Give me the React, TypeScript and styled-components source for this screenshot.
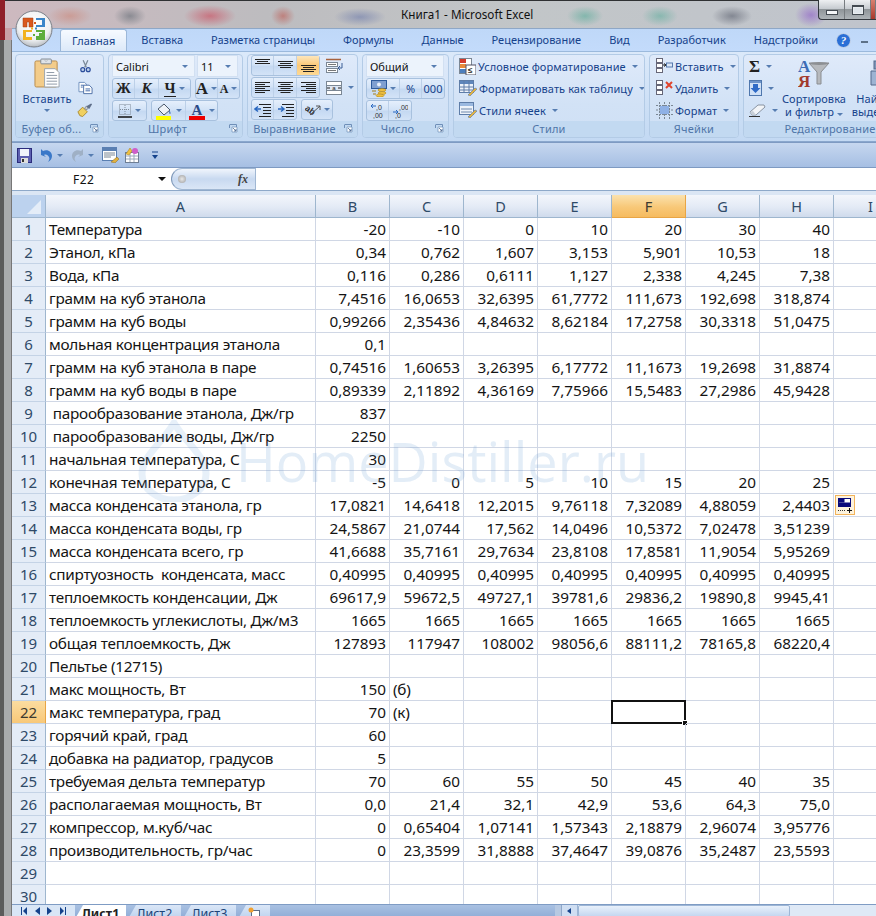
import React from "react";
import styled, { createGlobalStyle } from "styled-components";

const GlobalStyle = createGlobalStyle`
  html, body { margin: 0; padding: 0; background: #777; }
  * { box-sizing: border-box; }
`;

const UI_FONT = `"Noto Sans", "Open Sans", sans-serif`;
const CELL_FONT = `"Noto Sans", "Open Sans", sans-serif`;

const rows: string[][] = [
  ["Температура", "-20", "-10", "0", "10", "20", "30", "40"],
  ["Этанол, кПа", "0,34", "0,762", "1,607", "3,153", "5,901", "10,53", "18"],
  ["Вода, кПа", "0,116", "0,286", "0,6111", "1,127", "2,338", "4,245", "7,38"],
  ["грамм на куб этанола", "7,4516", "16,0653", "32,6395", "61,7772", "111,673", "192,698", "318,874"],
  ["грамм на куб воды", "0,99266", "2,35436", "4,84632", "8,62184", "17,2758", "30,3318", "51,0475"],
  ["мольная концентрация этанола", "0,1"],
  ["грамм на куб этанола в паре", "0,74516", "1,60653", "3,26395", "6,17772", "11,1673", "19,2698", "31,8874"],
  ["грамм на куб воды в паре", "0,89339", "2,11892", "4,36169", "7,75966", "15,5483", "27,2986", "45,9428"],
  [" парообразование этанола, Дж/гр", "837"],
  [" парообразование воды, Дж/гр", "2250"],
  ["начальная температура, С", "30"],
  ["конечная температура, С", "-5", "0", "5", "10", "15", "20", "25"],
  ["масса конденсата этанола, гр", "17,0821", "14,6418", "12,2015", "9,76118", "7,32089", "4,88059", "2,4403"],
  ["масса конденсата воды, гр", "24,5867", "21,0744", "17,562", "14,0496", "10,5372", "7,02478", "3,51239"],
  ["масса конденсата всего, гр", "41,6688", "35,7161", "29,7634", "23,8108", "17,8581", "11,9054", "5,95269"],
  ["спиртуозность  конденсата, масс", "0,40995", "0,40995", "0,40995", "0,40995", "0,40995", "0,40995", "0,40995"],
  ["теплоемкость конденсации, Дж", "69617,9", "59672,5", "49727,1", "39781,6", "29836,2", "19890,8", "9945,41"],
  ["теплоемкость углекислоты, Дж/м3", "1665", "1665", "1665", "1665", "1665", "1665", "1665"],
  ["общая теплоемкость, Дж", "127893", "117947", "108002", "98056,6", "88111,2", "78165,8", "68220,4"],
  ["Пельтье (12715)"],
  ["макс мощность, Вт", "150", "(б)"],
  ["макс температура, град", "70", "(к)"],
  ["горячий край, град", "60"],
  ["добавка на радиатор, градусов", "5"],
  ["требуемая дельта температур", "70", "60", "55", "50", "45", "40", "35"],
  ["располагаемая мощность, Вт", "0,0", "21,4", "32,1", "42,9", "53,6", "64,3", "75,0"],
  ["компрессор, м.куб/час", "0", "0,65404", "1,07141", "1,57343", "2,18879", "2,96074", "3,95776"],
  ["производительность, гр/час", "0", "23,3599", "31,8888", "37,4647", "39,0876", "35,2487", "23,5593"],
  [],
  [],
];
const columns = ["A", "B", "C", "D", "E", "F", "G", "H", "I"];
const tabs = ["Главная", "Вставка", "Разметка страницы", "Формулы", "Данные", "Рецензирование", "Вид", "Разработчик", "Надстройки"];

const Frame = styled.div`
  position: relative;
  width: 876px;
  height: 916px;
  overflow: hidden;
  display: flex;
  flex-direction: column;
  font-family: ${UI_FONT};
  background:
    linear-gradient(90deg, #8f1f28 0 5px, #c9a0a6 5px 12px) 0 0 / 100% 40px no-repeat,
    linear-gradient(90deg, #5b5b5b 0 4px, #a9abad 4px 11px, #777 11px 12px);
`;
const TitleBar = styled.div`
  height: 28px;
  flex: none;
  display: flex;
  padding-left: 396px;
  border-top: 1px solid #2f3133;
  margin-left: 5px;
  background:
    radial-gradient(ellipse 22px 10px at 65px 15px, rgba(205, 120, 100, 0.45), transparent),
    radial-gradient(ellipse 16px 10px at 125px 15px, rgba(90, 100, 110, 0.55), transparent),
    radial-gradient(ellipse 26px 11px at 205px 15px, rgba(205, 60, 80, 0.55), transparent),
    radial-gradient(ellipse 12px 10px at 278px 15px, rgba(190, 70, 60, 0.5), transparent),
    radial-gradient(ellipse 26px 9px at 355px 16px, rgba(70, 90, 160, 0.4), transparent),
    radial-gradient(ellipse 18px 10px at 580px 15px, rgba(80, 170, 150, 0.55), transparent),
    radial-gradient(ellipse 18px 10px at 655px 15px, rgba(80, 170, 150, 0.5), transparent),
    radial-gradient(ellipse 20px 10px at 727px 15px, rgba(80, 85, 100, 0.55), transparent),
    radial-gradient(ellipse 16px 12px at 806px 14px, rgba(140, 90, 200, 0.6), transparent),
    linear-gradient(90deg, #cdb9bf 0, #bdbcbf 30%, #c2c6c8 60%, #c0c4cc 100%);
`;
const Title = styled.div`
  font-size: 11.7px;
  line-height: 26px;
  color: #111;
  white-space: nowrap;
`;
const WinControls = styled.div`
  margin-left: auto;
  display: flex;
  height: 20px;
  margin-top: -1px;
  border: 1px solid #33383e;
  border-top: 0;
  border-right: 0;
  border-radius: 0 0 0 4px;
  background: linear-gradient(#eef0f2 0, #c7ccd1 45%, #8f9599 50%, #aeb4b8 100%);
`;
const WinButton = styled.div<{ $w: number; $close?: boolean }>`
  width: ${(p) => p.$w}px;
  display: flex;
  align-items: center;
  justify-content: center;
  border-right: 1px solid #777c80;
  background: ${(p) => (p.$close ? "linear-gradient(#d88070, #a8382a)" : "none")};
`;
const WinMin = styled.i`
  width: 12px;
  height: 5px;
  margin-top: 5px;
  border: 1px solid #444b52;
  background: #f4f6f8;
`;
const WinMax = styled.i`
  width: 12px;
  height: 10px;
  border: 1px solid #444b52;
  border-top-width: 2px;
  background: #dfe5ea;
  box-shadow: inset 0 0 0 1px #e9edf0;
`;
const Body = styled.div`
  margin-left: 12px;
  flex: 1;
  min-height: 0;
  display: flex;
  flex-direction: column;
  background: #bfdbff;
`;
const TabRow = styled.div`
  height: 23px;
  flex: none;
  display: flex;
  align-items: flex-end;
  padding-left: 48px;
  background: linear-gradient(#bfd8f8, #c3dbfb);
  border-top: 1px solid #8ea7c6;
`;
const Tab = styled.div<{ $active?: boolean }>`
  height: 22px;
  padding: 0 14px;
  font-size: 11px;
  line-height: 21px;
  color: #15428b;
  white-space: nowrap;
  ${(p) =>
    p.$active &&
    `
    padding: 0 11px;
    background: linear-gradient(#f6faff, #dce9f9);
    border: 1px solid #9cb8d9;
    border-bottom: 0;
    border-radius: 3px 3px 0 0;
  `}
`;
const HelpWrap = styled.div`
  margin-left: 4px;
  display: flex;
  align-items: center;
  gap: 10px;
  height: 22px;
`;
const MiniDash = styled.i`
  width: 7px;
  height: 2px;
  margin-top: 3px;
  background: #5d7188;
`;
const Ribbon = styled.div`
  height: 91px;
  flex: none;
  display: flex;
  gap: 4px;
  padding: 2px 0 0 3px;
  background: linear-gradient(#dbe9fa, #c3d9f3);
  border-top: 1px solid #9bb9dc;
  border-bottom: 1px solid #8aa7cd;
`;
const Group = styled.div<{ $w: number }>`
  width: ${(p) => p.$w}px;
  height: 84px;
  flex: none;
  display: flex;
  flex-direction: column;
  border: 1px solid #b3cbe6;
  border-radius: 4px;
  background: linear-gradient(#dfeafa, #d2e2f6 60%, #cfe0f5);
  overflow: hidden;
`;
const GroupBody = styled.div<{ $pad?: number }>`
  flex: 1;
  min-height: 0;
  display: flex;
  padding: 0 0 0 ${(p) => p.$pad ?? 3}px;
`;
const GroupLabel = styled.div<{ $launcher?: boolean }>`
  height: 16px;
  flex: none;
  display: flex;
  align-items: center;
  justify-content: center;
  padding: ${(p) => (p.$launcher ? "0 20px 2px 4px" : "0 0 2px")};
  position: relative;
  background: #c2d9f1;
  color: #4f75a8;
  font-size: 11px;
  letter-spacing: 0.2px;
  white-space: nowrap;
`;
const Launcher = styled.svg`
  position: absolute;
  right: 4px;
  top: 3px;
`;
const Stack = styled.div<{ $gap?: number }>`
  display: flex;
  flex-direction: column;
  gap: ${(p) => p.$gap ?? 1}px;
`;
const Line = styled.div<{ $gap?: number }>`
  display: flex;
  align-items: center;
  gap: ${(p) => p.$gap ?? 4}px;
`;
const Combo = styled.div<{ $w: number }>`
  width: ${(p) => p.$w}px;
  height: 22px;
  display: flex;
  align-items: center;
  justify-content: space-between;
  padding: 0 6px 0 3px;
  background: #ecf3fc;
  border: 1px solid #d2e0f2;
  font-size: 11px;
  color: #111;
`;
const BtnGroup = styled.div`
  height: 21px;
  display: flex;
  border: 1px solid #a8c1de;
  border-radius: 3px;
  background: linear-gradient(#e5effc, #d3e3f7 45%, #c5d9f2 55%, #d3e3f7);
`;
const Btn = styled.div<{ $w: number; $on?: boolean }>`
  width: ${(p) => p.$w}px;
  display: flex;
  align-items: center;
  justify-content: center;
  gap: 3px;
  border-right: 1px solid #bcd0e8;
  &:last-child { border-right: 0; }
  background: ${(p) => (p.$on ? "linear-gradient(#fde6bc, #fbc877 50%, #fdd995)" : "none")};
`;
const Glyph = styled.span<{ $size?: number; $italic?: boolean; $under?: boolean }>`
  font-family: "Liberation Serif", "DejaVu Serif", serif;
  font-weight: 700;
  font-size: ${(p) => p.$size ?? 15}px;
  line-height: 1;
  color: #222;
  font-style: ${(p) => (p.$italic ? "italic" : "normal")};
  border-bottom: ${(p) => (p.$under ? "1.5px solid #222" : "0")};
`;
const Caret = styled.i`
  display: inline-block;
  flex: none;
  width: 0;
  height: 0;
  border-left: 3px solid transparent;
  border-right: 3px solid transparent;
  border-top: 3px solid #567db1;
`;
const CmdText = styled.span`
  font-size: 11px;
  letter-spacing: 0.08px;
  color: #15428b;
  white-space: nowrap;
`;
const CmdRow = styled.div`
  height: 22px;
  display: flex;
  align-items: center;
  gap: 2px;
  white-space: nowrap;
`;
const CmdCaret = styled(Caret)`
  margin-left: 4px;
`;
const PasteBtn = styled.div`
  width: 54px;
  margin-left: 1px;
  display: flex;
  flex-direction: column;
  align-items: center;
  padding-top: 3px;
`;
const PasteLabel = styled(CmdText)`
  margin: 4px 0 3px;
  line-height: 14px;
  letter-spacing: 0.15px;
`;
const BigLabel = styled(CmdText)`
  text-align: center;
  line-height: 13px;
`;
const SideIcons = styled.div`
  margin-left: 3px;
  display: flex;
  flex-direction: column;
  align-items: center;
  padding-top: 4px;
  gap: 7px;
`;
const SortBtn = styled.div<{ $w: number }>`
  width: ${(p) => p.$w}px;
  flex: none;
  display: flex;
  flex-direction: column;
  align-items: center;
  padding-top: 3px;
  gap: 4px;
`;
const Qat = styled.div`
  height: 26px;
  flex: none;
  display: flex;
  align-items: center;
  gap: 8px;
  padding-left: 5px;
  background: linear-gradient(#c6d7ef, #a6bfe3);
  border-top: 1px solid #7e9ac2;
  border-bottom: 1px solid #7e9ac2;
`;
const MacroSlot = styled.span`
  display: flex;
  margin-left: -3px;
`;
const MoreSlot = styled.span`
  display: flex;
  margin-left: 3px;
`;
const FormulaBar = styled.div`
  height: 23px;
  flex: none;
  display: flex;
  background: #fff;
  border-bottom: 1px solid #8ea9c9;
`;
const NameBox = styled.div`
  width: 159px;
  flex: none;
  display: flex;
  align-items: center;
  justify-content: space-between;
  padding: 0 5px 0 61px;
  font-size: 12px;
  letter-spacing: 0.4px;
  color: #111;
`;
const NameCaret = styled.i`
  width: 0;
  height: 0;
  border-left: 4px solid transparent;
  border-right: 4px solid transparent;
  border-top: 4px solid #111;
`;
const FxPill = styled.div`
  width: 85px;
  flex: none;
  display: flex;
  align-items: center;
  justify-content: space-between;
  padding: 0 7px 0 6px;
  border: 1px solid #a0b7d3;
  border-left-color: #7d97b8;
  border-radius: 11px 0 0 11px;
  background: linear-gradient(#f0f5fc, #c8d9f0 50%, #dae6f6);
`;
const FxDot = styled.i`
  width: 8px;
  height: 8px;
  border-radius: 50%;
  background: radial-gradient(#e8e8e8, #9d9d9d);
`;
const Fx = styled.span`
  font-family: "Liberation Serif", serif;
  font-style: italic;
  font-weight: 700;
  font-size: 12px;
  color: #444;
`;
const GapBar = styled.div`
  height: 4px;
  flex: none;
  background: #dbe6f4;
`;
const Sheet = styled.div`
  position: relative;
  height: 709px;
  flex: none;
  overflow: hidden;
  background: #fff;
`;
const GridRow = styled.div`
  display: grid;
  grid-template-columns: 34px 270px repeat(8, 74px);
  height: 23px;
`;
const Corner = styled.div`
  position: relative;
  background: #bcd2ee;
  border-right: 1px solid #9eb6ce;
  border-bottom: 1px solid #9eb6ce;
  &::after {
    content: "";
    position: absolute;
    right: 4px;
    bottom: 3px;
    border-left: 14px solid transparent;
    border-bottom: 14px solid #e4edf8;
  }
`;
const ColHead = styled.div<{ $on?: boolean }>`
  display: flex;
  align-items: center;
  justify-content: center;
  font-family: ${CELL_FONT};
  font-size: 14.5px;
  color: ${(p) => (p.$on ? "#3c3a30" : "#2f4a68")};
  background: ${(p) =>
    p.$on ? "linear-gradient(#fbe2ae, #f8c878 55%, #f6bb5f)" : "linear-gradient(#f3f6fb, #e3eaf5 55%, #cfdbec)"};
  border-right: 1px solid ${(p) => (p.$on ? "#e8a545" : "#9eb6ce")};
  border-bottom: 1px solid ${(p) => (p.$on ? "#e8a545" : "#9eb6ce")};
`;
const RowHead = styled.div<{ $on?: boolean }>`
  display: flex;
  align-items: center;
  justify-content: center;
  font-family: ${CELL_FONT};
  font-size: 15px;
  color: ${(p) => (p.$on ? "#3c3a30" : "#2f4a68")};
  background: ${(p) => (p.$on ? "linear-gradient(#fbdca0, #f8c878)" : "#e4ecf7")};
  border-right: 1px solid ${(p) => (p.$on ? "#e8a545" : "#9eb6ce")};
  border-bottom: 1px solid #c4d3e6;
`;
const Cell = styled.div<{ $right?: boolean; $selected?: boolean }>`
  position: relative;
  min-width: 0;
  padding: 0 3px;
  font-family: ${CELL_FONT};
  font-size: 15.3px;
  line-height: 22px;
  color: #141414;
  white-space: pre;
  text-align: ${(p) => (p.$right ? "right" : "left")};
  letter-spacing: ${(p) => (p.$right ? "0" : "-0.25px")};
  border-right: 1px solid #d0d7e5;
  border-bottom: 1px solid #d0d7e5;
  ${(p) =>
    p.$selected &&
    `
    &::before {
      content: "";
      position: absolute;
      box-sizing: border-box;
      left: -1px;
      top: -1px;
      width: 75px;
      height: 24px;
      border: 2px solid #111;
    }
    &::after {
      content: "";
      position: absolute;
      box-sizing: border-box;
      right: -3px;
      bottom: -3px;
      width: 6px;
      height: 6px;
      background: #111;
      border: 1px solid #fff;
    }
  `}
`;
const SmartTag = styled.div`
  position: absolute;
  left: 1px;
  top: 1px;
  width: 20px;
  height: 20px;
  background: #fdf3dd;
  border: 1px solid #f3b45c;
  display: flex;
  align-items: center;
  justify-content: center;
`;
const Watermark = styled.div`
  position: absolute;
  left: 125px;
  top: 225px;
  display: flex;
  align-items: center;
  gap: 25px;
  pointer-events: none;
`;
const WatermarkText = styled.span`
  font-family: "Open Sans", "Noto Sans", sans-serif;
  font-weight: 400;
  font-size: 54px;
  line-height: 60px;
  color: rgba(105, 160, 215, 0.19);
  white-space: nowrap;
`;
const SheetBar = styled.div`
  height: 12px;
  flex: none;
  display: flex;
  align-items: flex-start;
  background: linear-gradient(#a9c1e2, #93afd8);
  border-top: 1px solid #7f9cc4;
  overflow: hidden;
`;
const NavBtns = styled.div`
  width: 63px;
  height: 12px;
  flex: none;
  display: flex;
  align-items: center;
  justify-content: space-around;
  padding: 0 6px;
  background: #d9e6f6;
`;
const SheetTab = styled.div<{ $active?: boolean; $w: number }>`
  width: ${(p) => p.$w}px;
  height: 14px;
  flex: none;
  text-align: center;
  font-family: ${CELL_FONT};
  font-size: 12.5px;
  font-weight: ${(p) => (p.$active ? 700 : 400)};
  line-height: 18px;
  color: ${(p) => (p.$active ? "#222" : "#1c4478")};
  background: ${(p) => (p.$active ? "#fff" : "linear-gradient(#dbe7f7, #bcd1ee)")};
  clip-path: polygon(8px 0, 100% 0, 100% 100%, 0 100%);
  margin-right: 2px;
`;
const Filler = styled.div`
  flex: 1;
`;
const ScrollZone = styled.div`
  width: 321px;
  height: 12px;
  flex: none;
  display: flex;
  background: #dfe9f6;
`;
const Splitter = styled.i`
  width: 7px;
  background: #b7c9e2;
  border-right: 1px solid #8ea7c9;
`;
const ScrollArrow = styled.div`
  width: 16px;
  display: flex;
  align-items: center;
  justify-content: center;
  background: #cfdef2;
  border-right: 1px solid #9db6d6;
`;
const Thumb = styled.i`
  width: 212px;
  background: linear-gradient(#e9f1fb, #c4d7f0);
  border: 1px solid #9db6d6;
  border-radius: 2px;
`;
const OrbWrap = styled.svg`
  position: absolute;
  left: 15px;
  top: 10px;
`;

// drawings
const OfficeOrb = () => (
  <OrbWrap width="38" height="38" viewBox="0 0 38 38">
    <defs>
      <radialGradient id="orb" cx="50%" cy="35%" r="70%">
        <stop offset="0" stopColor="#fff" />
        <stop offset="0.65" stopColor="#eef0f2" />
        <stop offset="1" stopColor="#a9afb6" />
      </radialGradient>
    </defs>
    <circle cx="19" cy="19" r="18" fill="url(#orb)" stroke="#7b8088" />
    <path d="M8 8h10v9h-4v-5h-2v5H8z" fill="#d9581e" stroke="#a33f10" strokeWidth="0.5" />
    <path d="M21 8h9v9h-9v-2h6v-5h-6z" fill="#3b86c9" />
    <path d="M8 20h9v2h-6v5h6v3H8z" fill="#f2b21f" />
    <path d="M21 20h9v10h-9v-4h3v-3h3v-1h-6z" fill="#5eae3c" />
    <rect x="19" y="12" width="2" height="2" fill="#d9581e" />
    <rect x="16" y="17.5" width="2" height="2" fill="#f2b21f" />
    <rect x="20" y="17.5" width="2" height="2" fill="#3b86c9" />
    <rect x="18" y="24" width="2" height="2" fill="#5eae3c" />
  </OrbWrap>
);
const Clipboard = () => (
  <svg width="27" height="30" viewBox="0 0 28 31">
    <rect x="1" y="3" width="23" height="27" rx="1.5" fill="#f3cc8a" stroke="#b78a4b" />
    <rect x="7" y="1" width="11" height="5" rx="1" fill="#dfe3e8" stroke="#7f8894" />
    <circle cx="12.5" cy="2.5" r="1" fill="#fff" stroke="#7f8894" strokeWidth="0.5" />
    <path d="M11 11h11l4 4v15H11z" fill="#fff" stroke="#9aa3ad" />
    <path d="M13 15h8M13 18h11M13 21h11M13 24h11M13 27h11" stroke="#8d98a6" />
  </svg>
);
const Scissors = () => (
  <svg width="11" height="15" viewBox="0 0 14 16">
    <path d="M4 0l4 9M10 0L6 9" stroke="#7b8a99" strokeWidth="1.6" />
    <circle cx="3.5" cy="12" r="2.5" fill="#bcd0ea" stroke="#2c4e9c" strokeWidth="1.5" />
    <circle cx="10.5" cy="12" r="2.5" fill="#bcd0ea" stroke="#2c4e9c" strokeWidth="1.5" />
  </svg>
);
const CopyIcon = () => (
  <svg width="15" height="14" viewBox="0 0 16 14">
    <path d="M1 1h6l2 2v8H1z" fill="#fff" stroke="#6e8fbd" />
    <path d="M6 4h6l3 3v6H6z" fill="#fff" stroke="#4a6da5" />
    <path d="M3 4h3M3 6h2M8 8h5M8 10h5" stroke="#3a63a5" />
  </svg>
);
const BrushIcon = () => (
  <svg width="16" height="15" viewBox="0 0 17 15">
    <path d="M1 10l5-5 5 5-5 5-3-1z" fill="#f0d060" stroke="#a98a30" />
    <path d="M8 6l2-2 2 2-2 2z" fill="#c9cdd3" stroke="#7a8088" />
    <path d="M10 4l5-3 1 1-3 5z" fill="#5f6f8a" />
  </svg>
);
const Launch = () => (
  <Launcher width="9" height="9" viewBox="0 0 9 9">
    <path d="M.5.5h7v7M.5 1v3" fill="none" stroke="#6f8fb8" />
    <path d="M3 3h5v5H3z" fill="#fff" stroke="#6f8fb8" strokeWidth="0.7" />
    <path d="M4 4l3 3M7 5v2H5" fill="none" stroke="#47668f" strokeWidth="0.8" />
  </Launcher>
);
const BordersIcon = () => (
  <svg width="14" height="14" viewBox="0 0 14 14">
    <rect x="1.5" y="0.5" width="11" height="10" fill="none" stroke="#7f8b99" strokeDasharray="1 1" />
    <path d="M7 1v10M2 5.5h10" stroke="#7f8b99" strokeDasharray="1 1" />
    <path d="M0 13h14" stroke="#111" strokeWidth="1.5" />
  </svg>
);
const FillIcon = () => (
  <svg width="18" height="18" viewBox="0 0 18 18">
    <path d="M3 7l6-5 6 6-6 5z" fill="#eef2f7" stroke="#4c5a6c" />
    <path d="M14 8c2 2 2 4 1 4s-1-2-1-4z" fill="#4f7ec0" />
    <rect x="1" y="14" width="15" height="4" fill="#ffff00" />
  </svg>
);
const FontColorIcon = () => (
  <svg width="18" height="18" viewBox="0 0 18 18">
    <text x="9" y="12.5" fontFamily="Liberation Serif" fontWeight="700" fontSize="15" fill="#2b4a86" textAnchor="middle">A</text>
    <rect x="1" y="14" width="16" height="4" fill="#ee0000" />
  </svg>
);
const VAlign = ({ v }: { v: "t" | "c" | "b" }) => {
  const ys = v === "t" ? [2, 4, 6] : v === "c" ? [4, 6, 8, 10] : [8, 10, 12, 14];
  return (
    <svg width="15" height="16" viewBox="0 0 15 16">
      {ys.map((y, i) => (
        <path key={y} d={`M${i % 2 ? 2 : 0} ${y - 0.5}h${i % 2 ? 11 : 15}`} stroke="#222" />
      ))}
    </svg>
  );
};
const AlignH = ({ h }: { h: "l" | "c" | "r" }) => (
  <svg width="15" height="14" viewBox="0 0 15 14">
    {[1, 3, 5, 7, 9, 11].map((y, i) => {
      const len = i % 2 ? 10 : 15;
      const x = h === "l" ? 0 : h === "r" ? 15 - len : (15 - len) / 2;
      return <path key={y} d={`M${x} ${y + 0.5}h${len}`} stroke="#222" />;
    })}
  </svg>
);
const WrapIcon = () => (
  <svg width="18" height="16" viewBox="0 0 18 16">
    <path d="M0 1.5h15" stroke="#a7623c" strokeWidth="1.5" />
    <rect x="0.5" y="4.5" width="11" height="4" fill="#fff" stroke="#7b8794" />
    <rect x="0.5" y="10.5" width="11" height="4" fill="#fff" stroke="#7b8794" />
    <path d="M2 6.5h8M2 12.5h8" stroke="#777" />
    <path d="M16 5v5h-3M14 8l-2 2 2 2" fill="none" stroke="#3a5e96" />
  </svg>
);
const MergeIcon = () => (
  <svg width="16" height="14" viewBox="0 0 16 14">
    <rect x="0.5" y="0.5" width="15" height="13" fill="#fff" stroke="#7b8794" />
    <path d="M0 4.5h16M0 9.5h16" stroke="#7b8794" />
    <rect x="1" y="5" width="14" height="4" fill="#dfe7f3" />
    <text x="8" y="9" fontSize="6" fontFamily="Liberation Sans" fill="#222" textAnchor="middle">a</text>
    <path d="M1 7h3M15 7h-3" stroke="#222" />
  </svg>
);
const IndentIcon = ({ flip }: { flip?: boolean }) => (
  <svg width="17" height="14" viewBox="0 0 17 14">
    <path d="M5 1.5h12M9 4.5h8M9 7.5h8M9 10.5h8M5 13.5h12" stroke="#222" />
    <path d={flip ? "M1 6h5M4 3.5l3 2.5-3 2.5" : "M7 6H2M4 3.5L1 6l3 2.5"} fill="none" stroke="#2a68c0" strokeWidth="1.5" />
  </svg>
);
const OrientIcon = () => (
  <svg width="16" height="15" viewBox="0 0 16 15">
    <text x="1" y="10" fontSize="9" fontFamily="Liberation Sans" fontWeight="700" fill="#333" transform="rotate(35 4 6)">ab</text>
    <path d="M5 13L15 4M11 4h4v4" fill="none" stroke="#555" />
  </svg>
);
const CurrencyIcon = () => (
  <svg width="16" height="17" viewBox="0 0 16 17">
    <rect x="0.5" y="0.5" width="15" height="8" fill="#7f9fd0" stroke="#2e5b9c" />
    <circle cx="8" cy="4.5" r="2" fill="#e6eefb" />
    <ellipse cx="11" cy="10" rx="4" ry="1.5" fill="#f0c040" stroke="#a07c18" strokeWidth="0.5" />
    <ellipse cx="11" cy="13" rx="4" ry="1.5" fill="#f0c040" stroke="#a07c18" strokeWidth="0.5" />
    <ellipse cx="9" cy="15.5" rx="4" ry="1.5" fill="#f0c040" stroke="#a07c18" strokeWidth="0.5" />
    <path d="M1 11h4M2 14h3" stroke="#a07c18" />
  </svg>
);
const DecimalIcon = ({ more }: { more?: boolean }) => (
  <svg width="16" height="16" viewBox="0 0 16 16">
    <text x={more ? 7 : 6} y="7" fontSize="7" fontFamily="Liberation Sans" fill="#333">{more ? ",00" : ",0"}</text>
    <text x="3" y="15" fontSize="7" fontFamily="Liberation Sans" fill="#333">{more ? ",0" : ",00"}</text>
    <path d={more ? "M1 9h5M4 7l2 2-2 2" : "M6 3H1M3 1L1 3l2 2"} fill="none" stroke="#2a68c0" />
  </svg>
);
const CondIcon = () => (
  <svg width="17" height="17" viewBox="0 0 17 17">
    <rect x="0.5" y="0.5" width="12" height="15" fill="#fff" stroke="#7b8794" />
    <rect x="1" y="1" width="6" height="4" fill="#d33a2c" />
    <rect x="1" y="6" width="6" height="4" fill="#e88a3a" />
    <rect x="1" y="11" width="6" height="4" fill="#4d7ebc" />
    <rect x="7" y="7" width="10" height="10" fill="#fff" stroke="#556" />
    <text x="9" y="15" fontSize="8" fontFamily="Liberation Sans" fontWeight="700" fill="#222">≤</text>
  </svg>
);
const TableIcon = ({ small }: { small?: boolean }) => (
  <svg width="18" height="16" viewBox="0 0 18 16">
    <rect x="0.5" y="0.5" width="14" height="12" fill="#eef3fa" stroke="#5e7da8" />
    <rect x="1" y="1" width="13" height="3" fill={small ? "#9bb9e0" : "#5e86bc"} />
    {!small && <path d="M5 1v11M10 1v11M1 7h13M1 10h13" stroke="#5e7da8" />}
    {small && <path d="M2 7h11M2 10h11" stroke="#6f88ab" />}
    <path d="M9 15l7-7 2 1-7 7z" fill="#e6b53c" stroke="#5a73a3" strokeWidth="0.6" />
  </svg>
);
const InsertIcon = ({ kind }: { kind: "add" | "del" }) => (
  <svg width="17" height="16" viewBox="0 0 17 16">
    <rect x="0.5" y="0.5" width="6" height="4" fill="#fff" stroke="#667" />
    <rect x="0.5" y="5.5" width="6" height="4" fill="#fff" stroke="#667" />
    <rect x="0.5" y="10.5" width="6" height="4" fill="#fff" stroke="#667" />
    {kind === "add" ? (
      <>
        <rect x="10.5" y="5" width="6" height="4" fill="#dbe7f7" stroke="#5679ad" />
        <path d="M7 7h3M8 5.5L10 7 8 8.5" fill="none" stroke="#222" />
      </>
    ) : (
      <path d="M10 2l6 6M16 2l-6 6" stroke="#e0432c" strokeWidth="2" />
    )}
  </svg>
);
const FormatIcon = () => (
  <svg width="17" height="17" viewBox="0 0 17 17">
    <path d="M0 3.5h17M0 8h17M0 12.5h17M3.5 0v17M8.5 0v17M13.5 0v17" stroke="#7b8794" strokeDasharray="2 1" />
    <rect x="4" y="4" width="9" height="8" fill="#8fb1e6" />
  </svg>
);
const FillDown = () => (
  <svg width="13" height="16" viewBox="0 0 13 16">
    <rect x="0.5" y="0.5" width="12" height="15" fill="#cfe0f6" stroke="#4f77ad" />
    <rect x="1" y="1" width="11" height="2" fill="#6d93c9" />
    <path d="M4 4h5v4h2.5L6.5 13 1.5 8H4z" fill="#2e6ac6" />
  </svg>
);
const Eraser = () => (
  <svg width="17" height="14" viewBox="0 0 17 14">
    <path d="M1 9l8-7h6l1 2-9 8H3z" fill="#f2f4f7" stroke="#8893a2" />
    <path d="M1 9l2 3h4L4 8z" fill="#c8cfd8" />
    <path d="M0 13.5h11" stroke="#333" />
  </svg>
);
const SortIcon = () => (
  <svg width="32" height="30" viewBox="0 0 32 30">
    <text x="0" y="14" fontSize="17" fontFamily="Liberation Serif" fontWeight="700" fill="#3d6cb5">A</text>
    <text x="0" y="29" fontSize="17" fontFamily="Liberation Serif" fontWeight="700" fill="#a23a2c">Я</text>
    <path d="M11 5h20l-8 9v12h-4V14z" fill="#b6b9bd" stroke="#8a8d91" />
    <ellipse cx="21" cy="5.5" rx="9.5" ry="1.5" fill="#8c8f93" />
  </svg>
);
const FindIcon = () => (
  <svg width="18" height="30" viewBox="0 0 18 30">
    <rect x="5" y="3" width="8" height="8" fill="#7f96b8" stroke="#566b8c" />
    <path d="M2 13h14v14H2z" fill="#9db3d2" stroke="#566b8c" />
    <path d="M9 13v14" stroke="#566b8c" />
  </svg>
);
const SaveIcon = () => (
  <svg width="15" height="15" viewBox="0 0 15 15">
    <rect x="0.5" y="0.5" width="14" height="14" fill="#5d5fb0" stroke="#2b2c7c" />
    <rect x="3" y="1" width="9" height="7" fill="#f1f3fb" />
    <rect x="4" y="10" width="7" height="5" fill="#ddd" />
    <rect x="5" y="11" width="2" height="3" fill="#333" />
  </svg>
);
const UndoIcon = ({ off }: { off?: boolean }) => (
  <svg width="13" height="14" viewBox="0 0 13 14" style={{ transform: off ? "scaleX(-1)" : undefined }}>
    <path d="M1 7V1l2 2c5-2 9 1 9 5 0 3-2 5-4 6 1-2 2-3 1-5-1-2-3-3-5-2l2 2z" fill={off ? "#9fb0c5" : "#3a78c8"} />
  </svg>
);
const PreviewIcon = () => (
  <svg width="17" height="16" viewBox="0 0 17 16">
    <rect x="0.5" y="0.5" width="14" height="13" fill="#fff" stroke="#5a7fb2" />
    <rect x="1" y="1" width="13" height="3" fill="#5a7fb2" />
    <path d="M2 6h11M2 8h11M2 10h7" stroke="#7b8794" />
    <path d="M9 15l6-5 2 2-4 4z" fill="#e0b040" stroke="#8a6a20" strokeWidth="0.5" />
  </svg>
);
const MacroIcon = () => (
  <svg width="16" height="16" viewBox="0 0 16 16">
    <rect x="1.5" y="5.5" width="13" height="10" fill="#fff" stroke="#6e7e94" />
    <path d="M2 9h12M2 12h12M6 6v9M10 6v9" stroke="#9aa7b8" />
    <path d="M2 7L6 1l2 3-3 4z" fill="#f0c040" stroke="#a07c18" strokeWidth="0.5" />
    <circle cx="11" cy="4" r="3" fill="#d05ec8" />
  </svg>
);
const QatMore = () => (
  <svg width="8" height="9" viewBox="0 0 8 9">
    <path d="M1 1h6" stroke="#15428b" />
    <path d="M1 4h6L4 8z" fill="#15428b" />
  </svg>
);
const HelpIcon = () => (
  <svg width="15" height="15" viewBox="0 0 15 15">
    <circle cx="7.5" cy="7.5" r="7" fill="#2a6fd6" stroke="#c9d7ea" />
    <text x="7.5" y="11.3" fontSize="11" fontWeight="700" fontFamily="Liberation Serif" fontStyle="italic" fill="#fff" textAnchor="middle">?</text>
  </svg>
);
const Drop = () => (
  <svg width="74" height="82" viewBox="0 0 74 82">
    <path d="M37 3C26 22 5 36 5 54a32 26 0 0 0 64 0C69 36 48 22 37 3z" fill="none" stroke="rgba(105,160,215,0.16)" strokeWidth="7" />
  </svg>
);
const NavArrow = ({ d }: { d: string }) => (
  <svg width="7" height="8" viewBox="0 0 7 8">
    <path d={d} fill="#15428b" />
  </svg>
);
const NewSheet = () => (
  <svg width="14" height="11" viewBox="0 0 14 11">
    <rect x="4.5" y="3.5" width="8" height="7" fill="#fff" stroke="#5a6b85" />
    <circle cx="4" cy="3" r="2.5" fill="#f0a030" />
  </svg>
);
const TagIcon = () => (
  <svg width="15" height="15" viewBox="0 0 15 15">
    <rect x="0.5" y="0.5" width="12" height="8" fill="#fff" stroke="#0a0a7a" />
    <rect x="1" y="1" width="5.5" height="3.5" fill="#0a0a7a" />
    <rect x="1" y="4.5" width="11" height="3.5" fill="#0a0a7a" />
    <path d="M0 12.5h7" stroke="#333" strokeDasharray="1 1" />
    <path d="M11.5 10v5M9 12.5h5" stroke="#111" />
  </svg>
);

export default function App() {
  return (
    <>
      <GlobalStyle />
      <Frame>
        <TitleBar>
          <Title>Книга1 - Microsoft Excel</Title>
          <WinControls>
            <WinButton $w={26}><WinMin /></WinButton>
            <WinButton $w={26}><WinMax /></WinButton>
            <WinButton $w={5} $close />
          </WinControls>
        </TitleBar>
        <Body>
          <TabRow>
            {tabs.map((t, i) => (
              <Tab key={t} $active={i === 0}>{t}</Tab>
            ))}
            <HelpWrap>
              <HelpIcon />
              <MiniDash />
            </HelpWrap>
          </TabRow>

          <Ribbon>
            <Group $w={89}>
              <GroupBody>
                <PasteBtn>
                  <Clipboard />
                  <PasteLabel>Вставить</PasteLabel>
                  <Caret />
                </PasteBtn>
                <SideIcons>
                  <Scissors />
                  <CopyIcon />
                  <BrushIcon />
                </SideIcons>
              </GroupBody>
              <GroupLabel $launcher>Буфер об...<Launch /></GroupLabel>
            </Group>

            <Group $w={135}>
              <GroupBody>
                <Stack>
                  <Line $gap={2}>
                    <Combo $w={83}>Calibri<Caret /></Combo>
                    <Combo $w={41}>11<Caret /></Combo>
                  </Line>
                  <Line $gap={4}>
                    <BtnGroup>
                      <Btn $w={22}><Glyph>Ж</Glyph></Btn>
                      <Btn $w={24}><Glyph $italic>К</Glyph></Btn>
                      <Btn $w={31}><Glyph $under>Ч</Glyph><Caret /></Btn>
                    </BtnGroup>
                    <BtnGroup>
                      <Btn $w={22}><Glyph $size={17}>A</Glyph><Caret /></Btn>
                      <Btn $w={21}><Glyph $size={12}>A</Glyph><Caret /></Btn>
                    </BtnGroup>
                  </Line>
                  <Line $gap={4}>
                    <BtnGroup>
                      <Btn $w={33}><BordersIcon /><Caret /></Btn>
                    </BtnGroup>
                    <BtnGroup>
                      <Btn $w={34}><FillIcon /><Caret /></Btn>
                      <Btn $w={31}><FontColorIcon /><Caret /></Btn>
                    </BtnGroup>
                  </Line>
                </Stack>
              </GroupBody>
              <GroupLabel $launcher>Шрифт<Launch /></GroupLabel>
            </Group>

            <Group $w={111}>
              <GroupBody>
                <Stack>
                  <Line $gap={6}>
                    <BtnGroup>
                      <Btn $w={22}><VAlign v="t" /></Btn>
                      <Btn $w={23}><VAlign v="c" /></Btn>
                      <Btn $w={22} $on><VAlign v="b" /></Btn>
                    </BtnGroup>
                    <WrapIcon />
                  </Line>
                  <Line $gap={6}>
                    <BtnGroup>
                      <Btn $w={22}><AlignH h="l" /></Btn>
                      <Btn $w={23}><AlignH h="c" /></Btn>
                      <Btn $w={22}><AlignH h="r" /></Btn>
                    </BtnGroup>
                    <MergeIcon />
                    <Caret />
                  </Line>
                  <Line $gap={4}>
                    <BtnGroup>
                      <Btn $w={22}><IndentIcon /></Btn>
                      <Btn $w={22}><IndentIcon flip /></Btn>
                    </BtnGroup>
                    <BtnGroup>
                      <Btn $w={30}><OrientIcon /><Caret /></Btn>
                    </BtnGroup>
                  </Line>
                </Stack>
              </GroupBody>
              <GroupLabel $launcher>Выравнивание<Launch /></GroupLabel>
            </Group>

            <Group $w={87}>
              <GroupBody>
                <Stack>
                  <Combo $w={78}>Общий<Caret /></Combo>
                  <BtnGroup>
                    <Btn $w={33}><CurrencyIcon /><Caret /></Btn>
                    <Btn $w={22}><CmdText>%</CmdText></Btn>
                    <Btn $w={22}><CmdText>000</CmdText></Btn>
                  </BtnGroup>
                  <Line>
                    <BtnGroup>
                      <Btn $w={22}><DecimalIcon /></Btn>
                      <Btn $w={22}><DecimalIcon more /></Btn>
                    </BtnGroup>
                  </Line>
                </Stack>
              </GroupBody>
              <GroupLabel $launcher>Число<Launch /></GroupLabel>
            </Group>

            <Group $w={192}>
              <GroupBody $pad={5}>
                <Stack $gap={0}>
                  <CmdRow><CondIcon /><CmdText>Условное форматирование</CmdText><CmdCaret /></CmdRow>
                  <CmdRow><TableIcon /><CmdText>Форматировать как таблицу</CmdText><CmdCaret /></CmdRow>
                  <CmdRow><TableIcon small /><CmdText>Стили ячеек</CmdText><CmdCaret /></CmdRow>
                </Stack>
              </GroupBody>
              <GroupLabel>Стили</GroupLabel>
            </Group>

            <Group $w={90}>
              <GroupBody $pad={6}>
                <Stack $gap={0}>
                  <CmdRow><InsertIcon kind="add" /><CmdText>Вставить</CmdText><CmdCaret /></CmdRow>
                  <CmdRow><InsertIcon kind="del" /><CmdText>Удалить</CmdText><CmdCaret /></CmdRow>
                  <CmdRow><FormatIcon /><CmdText>Формат</CmdText><CmdCaret /></CmdRow>
                </Stack>
              </GroupBody>
              <GroupLabel>Ячейки</GroupLabel>
            </Group>

            <Group $w={174}>
              <GroupBody $pad={5}>
                <Stack $gap={0}>
                  <CmdRow><Glyph $size={17}>Σ</Glyph><CmdCaret /></CmdRow>
                  <CmdRow><FillDown /><CmdCaret /></CmdRow>
                  <CmdRow><Eraser /><CmdCaret /></CmdRow>
                </Stack>
                <SortBtn $w={72}>
                  <SortIcon />
                  <BigLabel>Сортировка<br />и фильтр <Caret /></BigLabel>
                </SortBtn>
                <SortBtn $w={56}>
                  <FindIcon />
                  <BigLabel>Найти и<br />выделить</BigLabel>
                </SortBtn>
              </GroupBody>
              <GroupLabel>Редактирование</GroupLabel>
            </Group>
          </Ribbon>

          <Qat>
            <SaveIcon />
            <Line><UndoIcon /><Caret /></Line>
            <Line><UndoIcon off /><Caret /></Line>
            <PreviewIcon />
            <MacroSlot><MacroIcon /></MacroSlot>
            <MoreSlot><QatMore /></MoreSlot>
          </Qat>

          <FormulaBar>
            <NameBox>F22<NameCaret /></NameBox>
            <FxPill><FxDot /><Fx>fx</Fx></FxPill>
          </FormulaBar>
          <GapBar />

          <Sheet>
            <GridRow>
              <Corner />
              {columns.map((c) => (
                <ColHead key={c} $on={c === "F"}>{c}</ColHead>
              ))}
            </GridRow>
            {rows.map((r, i) => (
              <GridRow key={i}>
                <RowHead $on={i === 21}>{i + 1}</RowHead>
                {columns.map((_, c) => {
                  const value = r[c] ?? "";
                  return (
                    <Cell
                      key={c}
                      $right={c > 0 && !value.startsWith("(")}
                      $selected={i === 21 && c === 5}
                    >
                      {value}
                      {i === 12 && c === 8 && (
                        <SmartTag><TagIcon /></SmartTag>
                      )}
                    </Cell>
                  );
                })}
              </GridRow>
            ))}
            <Watermark>
              <Drop />
              <WatermarkText>HomeDistiller.ru</WatermarkText>
            </Watermark>
          </Sheet>

          <SheetBar>
            <NavBtns>
              <NavArrow d="M0 0h1v8H0zM6 0v8L2 4z" />
              <NavArrow d="M6 0v8L1 4z" />
              <NavArrow d="M1 0v8l5-4z" />
              <NavArrow d="M6 0h1v8H6zM1 0v8l4-4z" />
            </NavBtns>
            <SheetTab $active $w={51}>Лист1</SheetTab>
            <SheetTab $w={53}>Лист2</SheetTab>
            <SheetTab $w={53}>Лист3</SheetTab>
            <SheetTab $w={32}><NewSheet /></SheetTab>
            <Filler />
            <ScrollZone>
              <Splitter />
              <ScrollArrow><NavArrow d="M5 1v6L1 4z" /></ScrollArrow>
              <Thumb />
            </ScrollZone>
          </SheetBar>
        </Body>
        <OfficeOrb />
      </Frame>
    </>
  );
}
